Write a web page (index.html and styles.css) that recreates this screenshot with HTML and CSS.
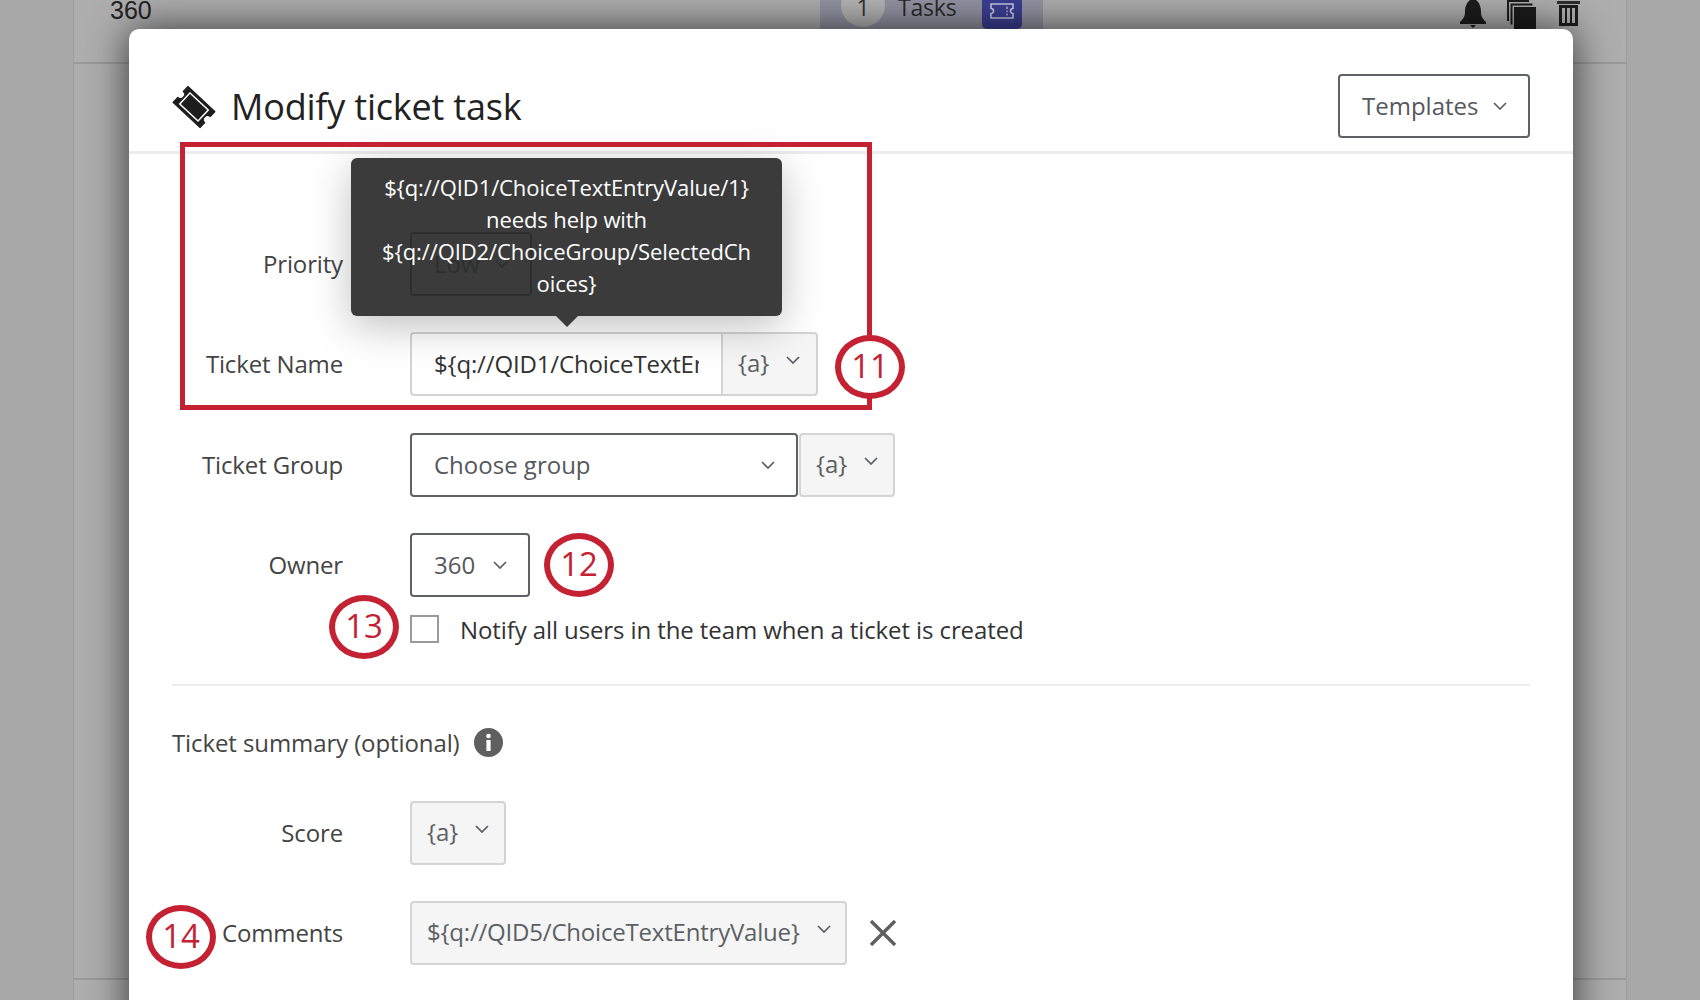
FILE: index.html
```html
<!DOCTYPE html>
<html lang="en">
<head>
<meta charset="utf-8">
<title>Modify ticket task</title>
<link rel="stylesheet" href="styles.css">
</head>
<body>
<div class="page">
  <div class="page-panel">
    <div class="page-bar">
      <span class="page-num">360</span>
      <div class="tasks-tab">
        <span class="tasks-count">1</span>
        <span class="tasks-label">Tasks</span>
        <span class="tasks-icon">
          <svg viewBox="0 0 24 16" width="24" height="16"><path d="M1 1h22v4.5a2.5 2.5 0 0 0 0 5V15H1v-4.5a2.5 2.5 0 0 0 0-5z" fill="none" stroke="#c9cae6" stroke-width="1.6"/><path d="M17 3.5v2.5M17 7.5v1.5M17 10.5v2" stroke="#c9cae6" stroke-width="1.3"/></svg>
        </span>
      </div>
      <div class="page-tools">
        <svg viewBox="0 0 26 29" width="26" height="29"><path d="M10 0h6c4 3 5 8 5 12 0 5 2 7 5 10v2H0v-2c3-3 5-5 5-10 0-4 1-9 5-12zM10 25h6l-3 3z" fill="#1c1c1c"/></svg>
        <svg viewBox="0 0 29 29" width="29" height="29"><path d="M0 0v21h2V2h20V0zM3.500 3.500v21h2V5.500h20v-2z" fill="#1c1c1c"/><rect x="7" y="7" width="22" height="22" fill="#1c1c1c"/></svg>
        <svg viewBox="0 0 23 27" width="23" height="27"><path d="M0 1h23v3H0z" fill="#2c2c2c"/><path d="M2 5h19v21H2zM5 8v15h3V8zM10 8v15h3V8zM15 8v15h3V8z" fill="#1c1c1c" fill-rule="evenodd"/></svg>
      </div>
    </div>
    <div class="page-section"></div>
  </div>
</div>

<main class="modal">
  <header class="modal-head">
    <h1 class="modal-title">
      <svg class="ticket-icon" viewBox="-22 -22 44 44" width="44" height="44"><g transform="rotate(43)"><path d="M-18.500 -11H18.500V-4a4 4 0 0 0 0 8V11H-18.500V4a4 4 0 0 0 0-8z" fill="#1d1d1d" stroke="#1d1d1d" stroke-width="1" stroke-linejoin="round"/><rect x="-12.500" y="-7.500" width="25" height="15" fill="none" stroke="#fff" stroke-width="1.500"/></g></svg>
      Modify ticket task
    </h1>
    <button class="select select-outline templates">Templates <svg class="chev" viewBox="0 0 14 8"><path d="M1 1l6 6 6-6"/></svg></button>
  </header>

  <div class="modal-body">
    <div class="row">
      <label class="label">Priority</label>
      <button class="select select-outline priority">Low <svg class="chev" viewBox="0 0 14 8"><path d="M1 1l6 6 6-6"/></svg></button>
    </div>
    <div class="row">
      <label class="label">Ticket Name</label>
      <div class="input-group">
        <input class="text-input" type="text" value="${q://QID1/ChoiceTextEntryValue/1} needs help with" readonly>
        <button class="piped piped-attached">{a} <svg class="chev chev-high" viewBox="0 0 14 8"><path d="M1 1l6 6 6-6"/></svg></button>
      </div>
    </div>
    <div class="row row-group">
      <label class="label">Ticket Group</label>
      <button class="select select-outline group">Choose group <svg class="chev" viewBox="0 0 14 8"><path d="M1 1l6 6 6-6"/></svg></button>
      <button class="piped group-piped">{a} <svg class="chev chev-high" viewBox="0 0 14 8"><path d="M1 1l6 6 6-6"/></svg></button>
    </div>
    <div class="row row-owner">
      <label class="label">Owner</label>
      <button class="select select-outline owner">360 <svg class="chev" viewBox="0 0 14 8"><path d="M1 1l6 6 6-6"/></svg></button>
    </div>
    <div class="check-row">
      <span class="checkbox"></span>
      <span class="check-text">Notify all users in the team when a ticket is created</span>
    </div>
    <hr class="rule">
    <div class="summary-head">
      <span>Ticket summary (optional)</span>
      <svg viewBox="0 0 29 29" width="29" height="29"><circle cx="14.500" cy="14.500" r="14.500" fill="#5f5f5f"/><circle cx="14.500" cy="8" r="2.300" fill="#fff"/><rect x="12.400" y="12" width="4.200" height="11" fill="#fff"/></svg>
    </div>
    <div class="row row-score">
      <label class="label">Score</label>
      <button class="piped score">{a} <svg class="chev chev-high" viewBox="0 0 14 8"><path d="M1 1l6 6 6-6"/></svg></button>
    </div>
    <div class="row">
      <label class="label">Comments</label>
      <button class="piped comments">${q://QID5/ChoiceTextEntryValue} <svg class="chev chev-high" viewBox="0 0 14 8"><path d="M1 1l6 6 6-6"/></svg></button>
      <svg class="close" viewBox="0 0 26 26" width="26" height="26"><path d="M1 1l24 24M25 1L1 25"/></svg>
    </div>
  </div>
</main>

<div class="tooltip">${q://QID1/ChoiceTextEntryValue/1} needs help with ${q://QID2/ChoiceGroup/SelectedCh<wbr>oices}</div>
<div class="callout-box"></div>
<span class="badge badge-11">11</span>
<span class="badge badge-12">12</span>
<span class="badge badge-13">13</span>
<span class="badge badge-14">14</span>
</body>
</html>
```
FILE: styles.css
```css
* { box-sizing: border-box; }
html, body { margin: 0; height: 100%; overflow: hidden; }
body { position: relative; font-family: "Open Sans", "Noto Sans", sans-serif; color: #2b2b2b; background: #a8a8a8; }

.page { height: 100%; padding: 0 73px; }
.page-panel { height: 100%; background: #aeaeae; border-left: 1px solid #9c9c9c; border-right: 1px solid #9c9c9c; }
.page-bar { height: 64px; display: flex; align-items: flex-start; border-bottom: 2px solid #999; position: relative; }
.page-section { height: 916px; border-bottom: 2px solid #999; }
.page-num { margin: -4px 0 0 36px; font-size: 25px; font-family: "Liberation Sans", sans-serif; color: #222; }
.tasks-tab { position: absolute; left: 746px; top: 0; width: 223px; height: 29px; background: #9393a3; display: flex; align-items: flex-start; overflow: hidden; }
.tasks-count { width: 44px; height: 44px; margin: -17px 0 0 21px; border-radius: 50%; background: #b4b4b4; font-size: 23px; display: flex; align-items: flex-end; justify-content: center; padding-bottom: 4px; color: #333; }
.tasks-label { margin: -9px 0 0 13px; font-size: 23px; color: #2a2a2a; letter-spacing: -.2px; }
.tasks-icon { position: absolute; left: 162px; top: 0; width: 40px; height: 29px; padding-top: 3px; background: #3c3f94; border-radius: 0 0 5px 5px; display: flex; align-items: flex-start; justify-content: center; }
.page-tools { position: absolute; right: 46px; top: 0; display: flex; gap: 21px; }

.modal { position: absolute; left: 129px; top: 29px; width: 1444px; height: 1100px; background: #fff; border-radius: 10px 10px 0 0; box-shadow: 0 0 40px rgba(0,0,0,.7); }
.modal-head { height: 125px; padding: 45px 43px 0 43px; display: flex; justify-content: space-between; align-items: flex-start; border-bottom: 3px solid #ececec; }
.modal-title { margin: 8px 0 0; display: flex; align-items: center; gap: 15px; font-size: 36px; font-weight: 400; color: #222; line-height: 50px; letter-spacing: -.2px; }
.ticket-icon { margin-top: -1px; }

.select, .piped { font: inherit; font-size: 24px; line-height: 32px; display: flex; align-items: center; height: 64px; border-radius: 4px; cursor: default; white-space: nowrap; }
.select-outline { background: #fff; border: 2px solid #5e6166; color: #55585c; padding: 0 21px 0 22px; justify-content: space-between; }
.piped { background: #f5f5f5; border: 2px solid #d4d4d4; color: #5c5f63; padding: 0 14px 3px 15px; gap: 17px; }
.chev { width: 14px; height: 8px; fill: none; stroke: #5b5e62; stroke-width: 1.7; flex: none; }
.chev-high { margin-top: -6px; }
.templates { width: 192px; }

.modal-body { padding: 78px 43px 0; position: relative; }
.row { display: flex; align-items: center; margin-bottom: 36px; }
.label { width: 171px; margin: -2px 67px 0 0; flex: none; text-align: right; font-size: 24px; color: #444; letter-spacing: -.15px; }
.priority { width: 122px; }
.input-group { display: flex; width: 408px; height: 64px; }
.text-input { width: 311px; height: 64px; padding: 0 22px 2px; border: 2px solid #d4d4d4; border-right: 0; border-radius: 4px 0 0 4px; font: inherit; font-size: 24px; color: #333; outline: none; letter-spacing: -.15px; }
.piped-attached { width: 97px; border-radius: 0 4px 4px 0; flex: none; }
.row-group { margin-top: 37px; }
.group { width: 388px; }
.group-piped { width: 96px; margin-left: 1px; }
.row-owner { margin-bottom: 18px; }
.owner { width: 120px; }
.check-row { display: flex; align-items: center; gap: 21px; margin-left: 238px; height: 28px; }
.checkbox { width: 29px; height: 28px; border: 2px solid #9a9a9a; background: #fff; }
.check-text { font-size: 24px; color: #333; letter-spacing: -.1px; }
.rule { margin: 41px 0 0; border: 0; height: 2px; background: #ececec; }
.summary-head { margin-top: 42px; height: 29px; display: flex; align-items: center; gap: 14px; font-size: 24px; color: #444; letter-spacing: -.1px; }
.row-score { margin-top: 44px; }
.score { width: 96px; }
.comments { width: 437px; padding-right: 14px; justify-content: space-between; gap: 0; letter-spacing: -.2px; }
.close { margin-left: 23px; fill: none; stroke: #5f5f5f; stroke-width: 3.4; }

.tooltip { position: absolute; left: 351px; top: 158px; width: 431px; height: 158px; padding: 13px 20px; background: rgba(42,42,42,.92); color: #fff; border-radius: 6px; font-size: 22px; letter-spacing: -.1px; line-height: 32px; text-align: center; box-shadow: 0 10px 40px rgba(0,0,0,.25); }
.tooltip::after { content: ""; position: absolute; left: 50%; bottom: -11px; margin-left: -11px; border: 11px solid transparent; border-bottom: 0; border-top-color: #3a3a3a; }
.callout-box { position: absolute; left: 180px; top: 142px; width: 692px; height: 268px; border: 5px solid #c42233; }
.badge { position: absolute; width: 70px; height: 64px; padding-bottom: 3px; border: 6px solid #c42233; border-radius: 50%; background: #fff; color: #c42233; font-size: 33px; display: flex; align-items: center; justify-content: center; }
.badge-11 { left: 835px; top: 335px; }
.badge-12 { left: 544px; top: 533px; }
.badge-13 { left: 329px; top: 595px; }
.badge-14 { left: 146px; top: 905px; }
```
